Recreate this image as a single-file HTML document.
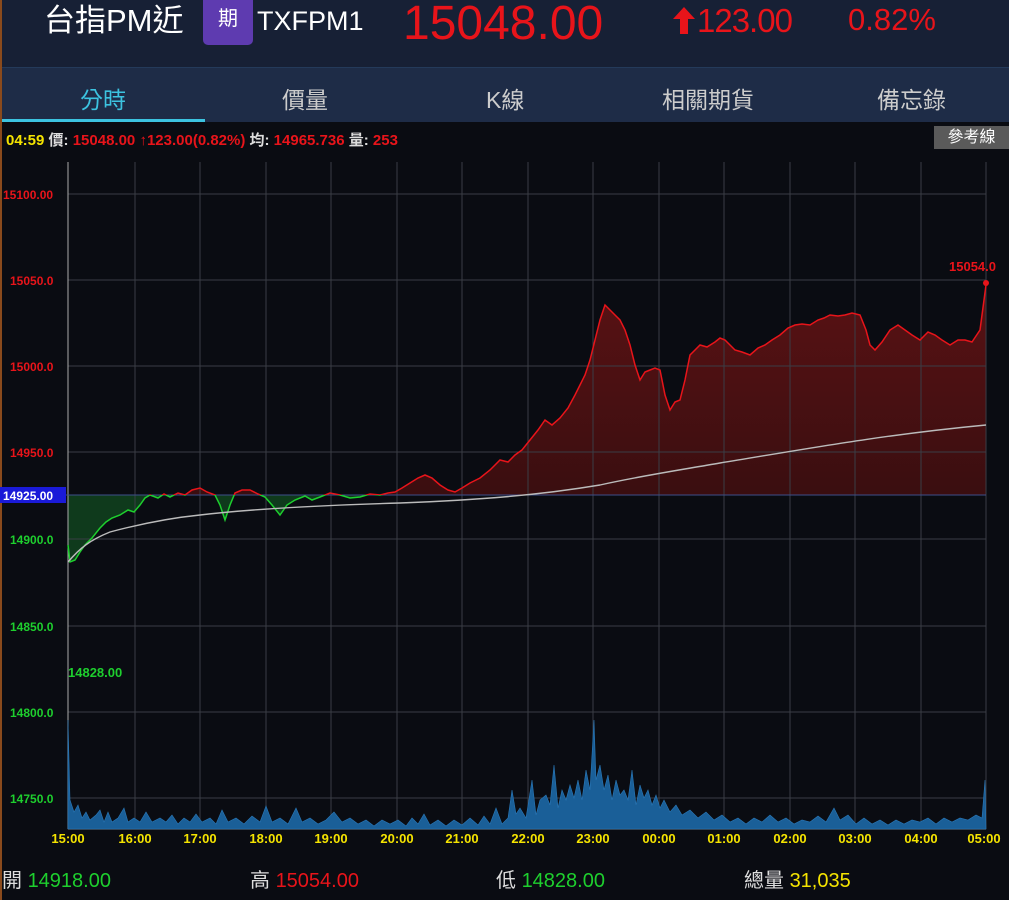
<!DOCTYPE html><html><head><meta charset="utf-8"><style>
*{margin:0;padding:0;box-sizing:border-box}
body{width:1009px;height:900px;background:#0a0c12;font-family:"Liberation Sans","Noto Sans CJK TC",sans-serif;position:relative;overflow:hidden}
.a{position:absolute;white-space:nowrap}
.h{line-height:1}
</style></head><body>
<div class="a" style="left:0;top:0;width:1009px;height:67px;background:#172035"></div>
<div class="a" style="left:0;top:67px;width:1009px;height:55px;background:#1e2c47;border-top:1px solid #243a5a"></div>
<div class="a" style="left:2px;top:119px;width:203px;height:3px;background:#3cc3e0"></div>
<div class="a" style="left:0;top:0;width:2px;height:900px;background:#8a4a1c"></div>
<div class="a h" style="left:44px;top:5px;font-size:31px;color:#fff">台指PM近</div>
<div class="a" style="left:203px;top:0;width:50px;height:45px;background:#5e3bb0;border-radius:0 0 5px 5px;color:#fff;font-size:20px;text-align:center;line-height:38px">期</div>
<div class="a h" style="left:257px;top:8px;font-size:27px;color:#fff">TXFPM1</div>
<div class="a h" style="left:403px;top:0px;font-size:48px;color:#e8141a">15048.00</div>
<svg class="a" style="left:673px;top:7px" width="22" height="27"><path d="M11,0 L22,12 L15,12 L15,27 L7,27 L7,12 L0,12 Z" fill="#e8141a"/></svg>
<div class="a h" style="left:697px;top:4px;font-size:33px;color:#e8141a;letter-spacing:-1px">123.00</div>
<div class="a h" style="left:848px;top:4px;font-size:31px;color:#e8141a">0.82%</div>
<div class="a" style="left:80px;top:81px;font-size:23px;color:#3cc3e0">分時</div>
<div class="a" style="left:282px;top:81px;font-size:23px;color:#ccc">價量</div>
<div class="a" style="left:486px;top:81px;font-size:23px;color:#ccc">K線</div>
<div class="a" style="left:662px;top:81px;font-size:23px;color:#ccc">相關期貨</div>
<div class="a" style="left:877px;top:81px;font-size:23px;color:#ccc">備忘錄</div>
<div class="a" style="left:6px;top:129px;font-size:15px;font-weight:bold;color:#e8141a"><span style="color:#f5e400">04:59</span> <span style="color:#ddd">價:</span> 15048.00 ↑123.00(0.82%) <span style="color:#ddd">均:</span> 14965.736 <span style="color:#ddd">量:</span> 253</div>
<div class="a" style="left:934px;top:126px;width:75px;height:23px;background:#5a5a5a;color:#fff;font-size:16px;text-align:center;line-height:23px">參考線</div>
<svg class="a" style="left:0;top:0" width="1009" height="900">
<defs><clipPath id="up"><rect x="0" y="150" width="1009" height="345"/></clipPath><clipPath id="dn"><rect x="0" y="495" width="1009" height="100"/></clipPath>
<linearGradient id="rg" x1="0" y1="280" x2="0" y2="495" gradientUnits="userSpaceOnUse"><stop offset="0" stop-color="#5a1214"/><stop offset="1" stop-color="#3a0e10"/></linearGradient>
<path id="p" d="M68,545 L70,562 L75,560 L80,552 L85,545 L92,538 L100,528 L106,522 L112,518 L120,515 L128,510 L134,512 L140,505 L145,498 L150,495 L158,498 L164,494 L170,497 L178,493 L185,495 L192,490 L200,488 L207,492 L215,495 L220,505 L225,520 L230,505 L235,493 L242,490 L250,490 L258,494 L265,497 L272,505 L280,515 L287,505 L295,500 L305,496 L312,500 L320,497 L330,493 L340,495 L350,498 L360,497 L370,494 L380,495 L388,493 L395,492 L402,488 L410,483 L418,478 L425,475 L432,478 L440,485 L448,490 L455,492 L462,488 L470,483 L480,478 L490,470 L495,465 L500,460 L508,462 L515,455 L522,450 L530,440 L538,430 L545,420 L552,425 L560,418 L568,408 L575,395 L580,385 L585,375 L590,360 L595,340 L600,320 L605,305 L610,310 L615,315 L620,320 L625,330 L630,345 L635,365 L640,380 L645,372 L650,370 L655,368 L660,370 L665,395 L670,410 L675,402 L680,400 L685,380 L690,355 L695,350 L700,345 L707,347 L715,342 L720,338 L725,340 L730,345 L735,350 L742,352 L750,355 L758,348 L765,345 L772,340 L780,335 L788,328 L795,325 L802,324 L810,325 L818,320 L824,318 L830,315 L838,316 L845,315 L852,313 L860,315 L866,330 L870,345 L875,350 L882,342 L890,330 L898,325 L905,330 L912,335 L920,340 L928,332 L935,335 L942,340 L950,345 L958,340 L965,340 L972,342 L980,330 L984,300 L986,285"/>
<path id="f" d="M68,495 L68,545 L70,562 L75,560 L80,552 L85,545 L92,538 L100,528 L106,522 L112,518 L120,515 L128,510 L134,512 L140,505 L145,498 L150,495 L158,498 L164,494 L170,497 L178,493 L185,495 L192,490 L200,488 L207,492 L215,495 L220,505 L225,520 L230,505 L235,493 L242,490 L250,490 L258,494 L265,497 L272,505 L280,515 L287,505 L295,500 L305,496 L312,500 L320,497 L330,493 L340,495 L350,498 L360,497 L370,494 L380,495 L388,493 L395,492 L402,488 L410,483 L418,478 L425,475 L432,478 L440,485 L448,490 L455,492 L462,488 L470,483 L480,478 L490,470 L495,465 L500,460 L508,462 L515,455 L522,450 L530,440 L538,430 L545,420 L552,425 L560,418 L568,408 L575,395 L580,385 L585,375 L590,360 L595,340 L600,320 L605,305 L610,310 L615,315 L620,320 L625,330 L630,345 L635,365 L640,380 L645,372 L650,370 L655,368 L660,370 L665,395 L670,410 L675,402 L680,400 L685,380 L690,355 L695,350 L700,345 L707,347 L715,342 L720,338 L725,340 L730,345 L735,350 L742,352 L750,355 L758,348 L765,345 L772,340 L780,335 L788,328 L795,325 L802,324 L810,325 L818,320 L824,318 L830,315 L838,316 L845,315 L852,313 L860,315 L866,330 L870,345 L875,350 L882,342 L890,330 L898,325 L905,330 L912,335 L920,340 L928,332 L935,335 L942,340 L950,345 L958,340 L965,340 L972,342 L980,330 L984,300 L986,285 L986,495 Z"/>
</defs>
<use href="#f" fill="url(#rg)" clip-path="url(#up)"/>
<use href="#f" fill="#0f3a1c" clip-path="url(#dn)"/>
<g stroke="#3a3d45" stroke-width="1">
<line x1="68" y1="194" x2="986" y2="194"/><line x1="68" y1="280" x2="986" y2="280"/><line x1="68" y1="366" x2="986" y2="366"/><line x1="68" y1="452" x2="986" y2="452"/><line x1="68" y1="539" x2="986" y2="539"/><line x1="68" y1="626" x2="986" y2="626"/><line x1="68" y1="712" x2="986" y2="712"/><line x1="68" y1="798" x2="986" y2="798"/>
<line x1="135" y1="162" x2="135" y2="829"/><line x1="200" y1="162" x2="200" y2="829"/><line x1="266" y1="162" x2="266" y2="829"/><line x1="331" y1="162" x2="331" y2="829"/><line x1="397" y1="162" x2="397" y2="829"/><line x1="462" y1="162" x2="462" y2="829"/><line x1="528" y1="162" x2="528" y2="829"/><line x1="593" y1="162" x2="593" y2="829"/><line x1="659" y1="162" x2="659" y2="829"/><line x1="724" y1="162" x2="724" y2="829"/><line x1="790" y1="162" x2="790" y2="829"/><line x1="855" y1="162" x2="855" y2="829"/><line x1="921" y1="162" x2="921" y2="829"/><line x1="986" y1="162" x2="986" y2="829"/>
</g>
<line x1="68" y1="162" x2="68" y2="829" stroke="#aaa"/>
<line x1="68" y1="829" x2="986" y2="829" stroke="#888"/>
<path d="M68,829 L68,720 L70,800 L74,812 L78,805 L82,818 L86,812 L90,820 L96,815 L100,810 L104,822 L108,812 L112,822 L118,818 L124,808 L128,822 L134,818 L140,822 L146,812 L152,822 L160,818 L166,822 L172,815 L178,824 L184,818 L190,822 L196,814 L202,822 L210,818 L216,824 L222,810 L228,822 L236,818 L244,824 L252,816 L260,822 L266,806 L272,822 L280,818 L288,824 L296,808 L302,822 L310,818 L318,824 L326,820 L334,812 L342,822 L350,818 L358,824 L366,820 L374,826 L382,820 L390,824 L398,820 L406,826 L412,818 L418,824 L424,814 L430,825 L438,820 L446,826 L454,820 L462,825 L470,818 L478,825 L484,816 L490,824 L496,808 L502,824 L508,818 L512,790 L516,814 L520,808 L526,818 L532,780 L536,815 L540,800 L546,795 L550,805 L554,765 L558,808 L562,790 L566,800 L570,785 L574,798 L578,780 L582,800 L586,770 L590,790 L594,720 L596,780 L600,765 L604,790 L608,775 L612,800 L616,780 L620,795 L624,790 L628,800 L632,770 L636,805 L640,785 L644,798 L648,790 L652,805 L656,795 L660,808 L664,800 L670,812 L676,805 L682,815 L690,810 L698,818 L706,812 L714,820 L722,815 L730,822 L738,818 L746,824 L754,818 L762,822 L770,815 L778,822 L786,818 L794,824 L802,820 L810,822 L818,816 L826,822 L834,808 L840,820 L848,815 L856,824 L864,818 L872,824 L880,820 L888,825 L896,820 L904,824 L912,820 L920,822 L928,818 L936,824 L944,818 L952,822 L960,818 L968,820 L976,815 L982,818 L985,780 L986,829 Z" fill="#1a5f98" stroke="#2a78b8" stroke-width="0.6"/>
<line x1="0" y1="495" x2="986" y2="495" stroke="#3d4f8a"/>
<use href="#p" fill="none" stroke="#e8141a" stroke-width="1.5" clip-path="url(#up)"/>
<use href="#p" fill="none" stroke="#1ecf2e" stroke-width="1.5" clip-path="url(#dn)"/>
<path d="M68,562 C80,548 90,540 110,532 C140,524 170,518 200,515 C260,508 330,505 400,503 C480,500 540,495 600,485 C640,476 680,470 720,463 C800,450 880,435 986,425" fill="none" stroke="#bbb" stroke-width="1.4"/>
<circle cx="986" cy="283" r="3" fill="#e8141a"/>
<g font-size="12" font-weight="bold" font-family="Liberation Sans,sans-serif">
<text x="3" y="199" fill="#e8141a">15100.00</text><text x="10" y="285" fill="#e8141a">15050.0</text><text x="10" y="371" fill="#e8141a">15000.0</text><text x="10" y="457" fill="#e8141a">14950.0</text>
<text x="10" y="544" fill="#1ecf2e">14900.0</text><text x="10" y="631" fill="#1ecf2e">14850.0</text><text x="10" y="717" fill="#1ecf2e">14800.0</text><text x="10" y="803" fill="#1ecf2e">14750.0</text>
<rect x="0" y="487" width="66" height="16" fill="#1a1ad8"/><text x="3" y="500" fill="#fff">14925.00</text>
<text x="68" y="677" fill="#1ecf2e" font-size="13">14828.00</text>
<text x="949" y="271" fill="#e8141a" font-size="13">15054.0</text>
<g fill="#f5e400" font-size="13" text-anchor="middle"><text x="68" y="843">15:00</text><text x="135" y="843">16:00</text><text x="200" y="843">17:00</text><text x="266" y="843">18:00</text><text x="331" y="843">19:00</text><text x="397" y="843">20:00</text><text x="462" y="843">21:00</text><text x="528" y="843">22:00</text><text x="593" y="843">23:00</text><text x="659" y="843">00:00</text><text x="724" y="843">01:00</text><text x="790" y="843">02:00</text><text x="855" y="843">03:00</text><text x="921" y="843">04:00</text><text x="984" y="843">05:00</text></g>
</g></svg>
<div class="a" style="left:2px;top:864px;font-size:20px;color:#ddd">開 <span style="color:#1ecf2e">14918.00</span></div>
<div class="a" style="left:250px;top:864px;font-size:20px;color:#ddd">高 <span style="color:#e8141a">15054.00</span></div>
<div class="a" style="left:496px;top:864px;font-size:20px;color:#ddd">低 <span style="color:#1ecf2e">14828.00</span></div>
<div class="a" style="left:744px;top:864px;font-size:20px;color:#ddd">總量 <span style="color:#f5e400">31,035</span></div>
</body></html>
